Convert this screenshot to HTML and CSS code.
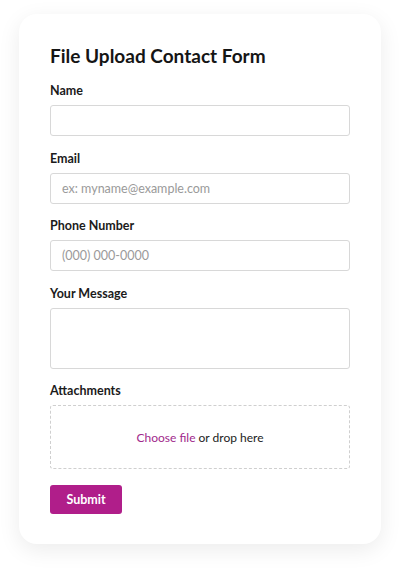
FILE: index.html
```
<!DOCTYPE html>
<html lang="en">
<head>
<meta charset="utf-8">
<title>File Upload Contact Form</title>
<link rel="stylesheet" href="styles.css">
</head>
<body>
<main class="page">
  <form class="card">
    <h1 class="title">File Upload Contact Form</h1>
    <div class="field">
      <label class="label">Name</label>
      <input class="input" type="text">
    </div>
    <div class="field">
      <label class="label">Email</label>
      <input class="input" type="text" placeholder="ex: myname@example.com">
    </div>
    <div class="field">
      <label class="label">Phone Number</label>
      <input class="input" type="text" placeholder="(000) 000-0000">
    </div>
    <div class="field">
      <label class="label">Your Message</label>
      <textarea class="input textarea"></textarea>
    </div>
    <div class="field">
      <label class="label">Attachments</label>
      <div class="drop"><span class="choose">Choose file</span>&nbsp;or drop here</div>
    </div>
    <div class="actions">
      <button class="submit" type="button">Submit</button>
    </div>
  </form>
</main>
</body>
</html>
```
FILE: styles.css
```
* { box-sizing: border-box; }
html, body { margin: 0; padding: 0; background: #fff; }
body {
  font-family: "Lato", "Open Sans", sans-serif;
  color: #1b1b1b;
}
.page {
  padding: 14px 19px 24px 19px;
}
.card {
  background: #fff;
  border-radius: 18px;
  box-shadow: 0 6px 22px rgba(0,0,0,0.08);
  padding: 30px 31px 30px 31px;
  display: flex;
  flex-direction: column;
}
.title {
  margin: 0 0 14px 0;
  font-size: 19px;
  line-height: 24px;
  font-weight: 700;
  color: #151515;
}
.field {
  display: flex;
  flex-direction: column;
  margin-bottom: 13.6px;
}
.label {
  font-size: 12.5px;
  line-height: 18px;
  font-weight: 700;
  margin-bottom: 5px;
  color: #1b1b1b;
}
.input {
  height: 31px;
  border: 1px solid #d8d8d8;
  border-radius: 3px;
  padding: 0 11px;
  font-family: "Lato", "Open Sans", sans-serif;
  font-size: 12.5px;
  color: #222;
  background: #fff;
}
.input::placeholder { color: #9a9a9a; }
.textarea {
  height: 61px;
  resize: none;
}
.drop {
  height: 64px;
  border: 1px dashed #cfcfcf;
  border-radius: 3px;
  display: flex;
  align-items: center;
  justify-content: center;
  font-size: 12px;
  color: #222;
}
.choose { color: #a1288c; }
.actions {
  display: flex;
  padding-top: 2px;
}
.submit {
  background: #b01e8a;
  color: #fff;
  border: none;
  border-radius: 3px;
  height: 29px;
  width: 72px;
  font-family: inherit;
  font-size: 12.5px;
  font-weight: 700;
}
```
